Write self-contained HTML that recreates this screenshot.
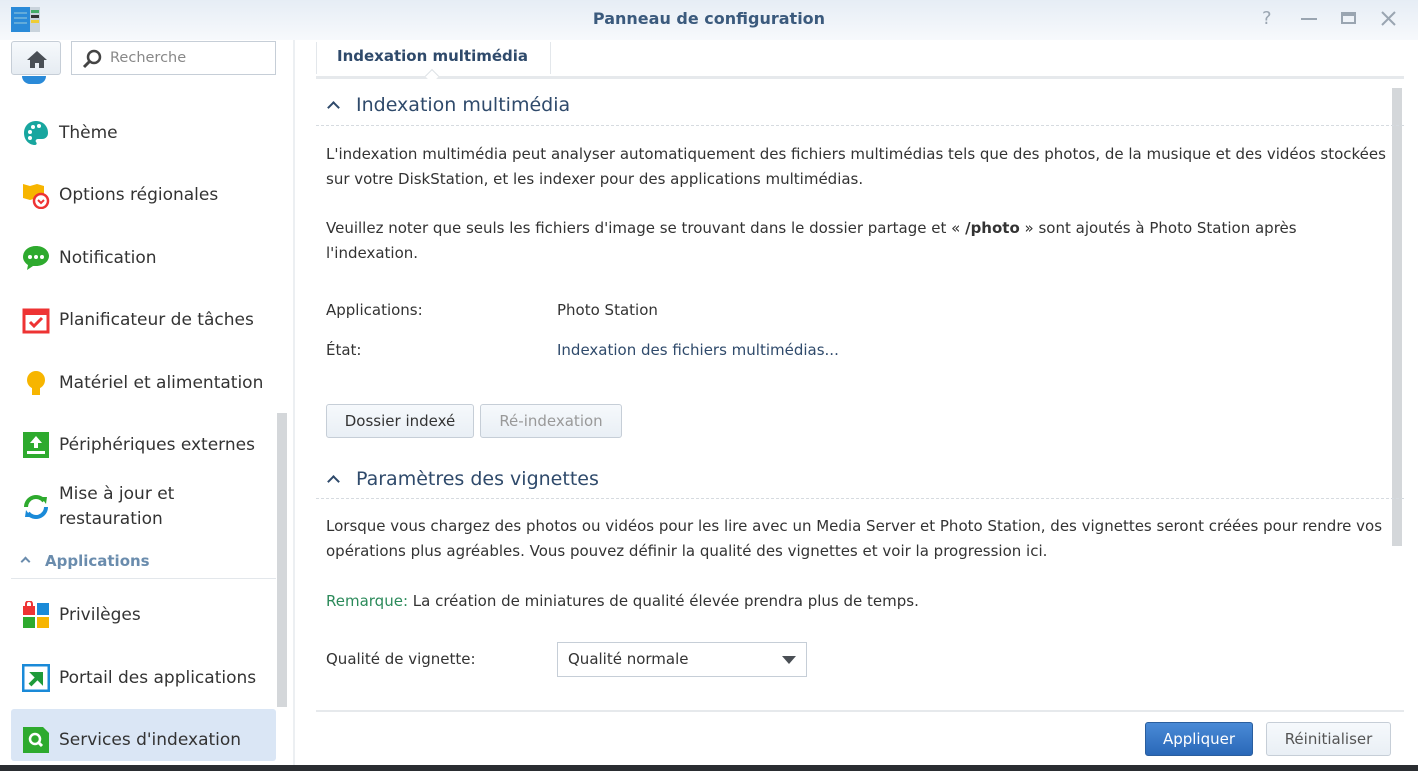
<!DOCTYPE html>
<html><head><meta charset="utf-8"><style>
*{margin:0;padding:0;box-sizing:border-box}
body{width:1418px;height:771px;overflow:hidden;background:#fff;font-family:"DejaVu Sans","Liberation Sans",sans-serif;color:#333;position:relative}
.abs{position:absolute}
.title{left:0;top:0;width:1418px;height:40px;background:linear-gradient(#e6edf5,#f7f9fc);}
.title .t{left:0;width:1418px;top:9px;text-align:center;font-size:16px;font-weight:bold;color:#3b5a7d}
.side{left:0;top:40px;width:295px;height:725px;border-right:2px solid #eceff2}
.it{position:absolute;left:22px;font-size:17px;color:#333;display:flex;align-items:center}
.it .ic{width:28px;height:28px;margin-right:9px;flex:none}
.p{font-size:15px;color:#333;position:absolute;left:326px;line-height:25px;white-space:nowrap}
.hd{position:absolute;left:356px;font-size:19px;color:#2f4a6b}
.hd:before{content:"";position:absolute;left:-27px;top:9px;width:7px;height:7px;border-left:2px solid #2f4a6b;border-top:2px solid #2f4a6b;transform:rotate(45deg)}
.dash{position:absolute;left:316px;width:1088px;border-top:1px dashed #d6dbe0}
.btn{position:absolute;height:34px;border:1px solid #c6ced7;border-radius:3px;background:linear-gradient(#f6f9fc,#e9eff5);font-size:15px;text-align:center;line-height:32px;color:#333}
</style></head><body>
<div class="abs title">
 <svg class="abs" style="left:11px;top:6px" width="30" height="27"><rect x="0" y="1" width="19" height="25" fill="#2a8ad8"/><rect x="19" y="1" width="10" height="25" fill="#c9d3dc"/><rect x="20" y="4" width="8" height="3" fill="#4a6"/><rect x="20" y="9" width="8" height="3" fill="#333"/><rect x="20" y="14" width="8" height="3" fill="#ec3"/><line x1="3" y1="7" x2="16" y2="7" stroke="#9cd" /><line x1="3" y1="12" x2="16" y2="12" stroke="#9cd"/><line x1="3" y1="17" x2="16" y2="17" stroke="#9cd"/></svg>
 <div class="abs t">Panneau de configuration</div>
 <div class="abs" style="left:1262px;top:8px;font-size:18px;color:#9aa5b1">?</div>
 <div class="abs" style="left:1301px;top:18px;width:16px;height:2px;background:#9aa5b1"></div>
 <div class="abs" style="left:1341px;top:12px;width:15px;height:12px;border:2px solid #9aa5b1;border-top-width:4px"></div>
 <svg class="abs" style="left:1381px;top:11px" width="15" height="15"><path d="M1 1L14 14M14 1L1 14" stroke="#9aa5b1" stroke-width="2"/></svg>
</div>
<div class="abs side">
 <div class="abs" style="left:11px;top:1px;width:50px;height:34px;border:1px solid #c6ced7;border-radius:3px;background:linear-gradient(#f6f9fc,#e6ecf2)"><svg style="margin:8px 0 0 14px" width="22" height="18"><path d="M11 1L1 10h3v8h5v-5h4v5h5v-8h3z" fill="#4a4f55"/></svg></div>
 <div class="abs" style="left:71px;top:1px;width:205px;height:34px;border:1px solid #c6ced7;background:#fff"><svg class="abs" style="left:10px;top:7px" width="20" height="20"><circle cx="12" cy="8" r="6" fill="none" stroke="#444" stroke-width="2.5"/><path d="M8 12L2 18" stroke="#444" stroke-width="3"/></svg><span class="abs" style="left:38px;top:8px;font-size:14.5px;color:#888">Recherche</span></div>
 <div class="abs" style="left:22px;top:36px;width:24px;height:8px;border-radius:0 0 12px 12px;background:#2a8ad8"></div>
</div>
<div class="it" style="top:119px"><svg class="ic" viewBox="0 0 28 28"><path d="M14 2C7 2 2 7 2 14s5 12 11 12c2 0 2-2 1-3s0-3 2-3h4c4 0 6-3 6-6C26 7 21 2 14 2z" fill="#18a69f"/><circle cx="8" cy="13" r="2" fill="#fff"/><circle cx="11" cy="8" r="2" fill="#fff"/><circle cx="17" cy="7" r="2" fill="#fff"/><circle cx="8" cy="19" r="2" fill="#fff"/></svg>Thème</div>
<div class="it" style="top:181px"><svg class="ic" viewBox="0 0 28 28"><path d="M1 3l7 2 7-2 7 2v14l-7-2-7 2-7-2z" fill="#f7b500"/><circle cx="19" cy="20" r="7" fill="#fff" stroke="#e33" stroke-width="2.5"/><path d="M16 19l3 3 3-3" stroke="#e33" stroke-width="2" fill="none"/></svg>Options régionales</div>
<div class="it" style="top:244px"><svg class="ic" viewBox="0 0 28 28"><path d="M14 2C6 2 1 7 1 13c0 3 2 6 5 8l-1 5 6-4c1 0 2 0 3 0 8 0 13-5 13-10S22 2 14 2z" fill="#2eaa2e"/><circle cx="8" cy="13" r="2" fill="#fff"/><circle cx="14" cy="13" r="2" fill="#fff"/><circle cx="20" cy="13" r="2" fill="#fff"/></svg>Notification</div>
<div class="it" style="top:306px"><svg class="ic" viewBox="0 0 28 28"><rect x="2" y="4" width="24" height="22" fill="#fff" stroke="#e33" stroke-width="3"/><rect x="2" y="4" width="24" height="5" fill="#e33"/><path d="M8 16l4 4 8-8" stroke="#e33" stroke-width="3" fill="none"/></svg>Planificateur de tâches</div>
<div class="it" style="top:369px"><svg class="ic" viewBox="0 0 28 28"><circle cx="14" cy="11" r="9" fill="#f7b500"/><rect x="10" y="19" width="8" height="7" fill="#f7b500"/></svg>Matériel et alimentation</div>
<div class="it" style="top:431px"><svg class="ic" viewBox="0 0 28 28"><rect x="1" y="1" width="26" height="26" fill="#2eaa2e"/><path d="M14 5l-6 7h4v5h4v-5h4z" fill="#fff"/><rect x="5" y="20" width="18" height="3" fill="#fff"/></svg>Périphériques externes</div>
<div class="it" style="top:482px;line-height:25px"><svg class="ic" viewBox="0 0 28 28"><path d="M4 14a10 10 0 0 1 18-6" stroke="#2eaa2e" stroke-width="4" fill="none"/><path d="M24 14a10 10 0 0 1-18 6" stroke="#1a8ad8" stroke-width="4" fill="none"/><path d="M19 4l6 0-1 7z" fill="#2eaa2e"/><path d="M9 24l-6 0 1-7z" fill="#1a8ad8"/></svg><span>Mise à jour et<br>restauration</span></div>
<div class="abs" style="left:22px;top:552px;font-size:15px;font-weight:bold;color:#6a8cad"><span style="display:inline-block;width:7px;height:7px;border-left:2px solid #6a8cad;border-top:2px solid #6a8cad;transform:rotate(45deg);margin:0 16px 1px 0"></span>Applications</div>
<div class="abs" style="left:11px;top:578px;width:265px;border-top:1px solid #e3e7eb"></div>
<div class="it" style="top:601px"><svg class="ic" viewBox="0 0 28 28"><rect x="1" y="5" width="12" height="9" fill="#e33"/><path d="M4 6V3a3 3 0 0 1 6 0v3" stroke="#e33" stroke-width="2" fill="none"/><rect x="15" y="2" width="12" height="12" fill="#1a8ad8"/><rect x="1" y="16" width="12" height="11" fill="#2eaa2e"/><rect x="15" y="16" width="12" height="11" fill="#f7b500"/></svg>Privilèges</div>
<div class="it" style="top:664px"><svg class="ic" viewBox="0 0 28 28"><rect x="1" y="1" width="26" height="26" fill="#fff" stroke="#1a8ad8" stroke-width="3"/><path d="M8 21l8-8m-4-3h7v7z" stroke="#1f9a3a" stroke-width="4" fill="#1f9a3a"/></svg>Portail des applications</div>
<div class="abs" style="left:11px;top:709px;width:265px;height:52px;background:#dae6f5;border-radius:3px"></div>
<div class="it" style="top:726px"><svg class="ic" viewBox="0 0 28 28"><path d="M1 1h20l6 6v20H1z" fill="#2eaa2e"/><circle cx="13" cy="13" r="5" fill="none" stroke="#fff" stroke-width="2.5"/><path d="M16 16l4 4" stroke="#fff" stroke-width="3"/></svg>Services d'indexation</div>
<div class="abs" style="left:277px;top:413px;width:10px;height:294px;background:#d4d7da"></div>
<div class="abs" style="left:0;top:765px;width:1418px;height:6px;background:#2a2d31"></div>

<div class="abs" style="left:316px;top:42px;width:1px;height:32px;background:#e3e7eb"></div>
<div class="abs" style="left:550px;top:42px;width:1px;height:32px;background:#e3e7eb"></div>
<div class="abs" style="left:337px;top:47px;font-size:15px;font-weight:bold;color:#2f4a6b">Indexation multimédia</div>
<div class="abs" style="left:316px;top:76px;width:1088px;height:3px;background:#e6e9ec"></div>
<div class="abs" style="left:427px;top:71px;width:10px;height:10px;background:#fff;border-left:1px solid #dde2e6;border-top:1px solid #dde2e6;transform:rotate(45deg)"></div>
<div class="abs" style="left:1392px;top:88px;width:10px;height:458px;background:#d4d7da"></div>

<div class="hd" style="top:94px">Indexation multimédia</div>
<div class="dash" style="top:125px"></div>
<div class="p" style="top:142px">L'indexation multimédia peut analyser automatiquement des fichiers multimédias tels que des photos, de la musique et des vidéos stockées<br>sur votre DiskStation, et les indexer pour des applications multimédias.</div>
<div class="p" style="top:216px">Veuillez noter que seuls les fichiers d'image se trouvant dans le dossier partage et « <b>/photo</b> » sont ajoutés à Photo Station après<br>l'indexation.</div>
<div class="p" style="top:298px">Applications:</div><div class="p" style="top:298px;left:557px">Photo Station</div>
<div class="p" style="top:338px">État:</div><div class="p" style="top:338px;left:557px;color:#2f4a6b">Indexation des fichiers multimédias...</div>
<div class="btn" style="left:326px;top:404px;width:148px">Dossier indexé</div>
<div class="btn" style="left:480px;top:404px;width:142px;color:#999">Ré-indexation</div>
<div class="hd" style="top:468px">Paramètres des vignettes</div>
<div class="dash" style="top:498px"></div>
<div class="p" style="top:514px">Lorsque vous chargez des photos ou vidéos pour les lire avec un Media Server et Photo Station, des vignettes seront créées pour rendre vos<br>opérations plus agréables. Vous pouvez définir la qualité des vignettes et voir la progression ici.</div>
<div class="p" style="top:589px"><span style="color:#2b8a5a">Remarque:</span> La création de miniatures de qualité élevée prendra plus de temps.</div>
<div class="p" style="top:647px">Qualité de vignette:</div>
<div class="abs" style="left:557px;top:642px;width:250px;height:35px;border:1px solid #c6ced7;background:#fff"><span class="abs" style="left:10px;top:7px;font-size:15px;color:#333">Qualité normale</span><svg class="abs" style="left:224px;top:13px" width="14" height="8"><path d="M0 0h14L7 8z" fill="#4a4f55"/></svg></div>
<div class="abs" style="left:316px;top:710px;width:1088px;height:2px;background:#e6e9ec"></div>
<div class="btn" style="left:1145px;top:722px;width:108px;background:linear-gradient(#4a8ad6,#2a68b8);border-color:#2a5e9e;color:#fff;font-size:15px">Appliquer</div>
<div class="btn" style="left:1266px;top:722px;width:125px;font-size:15px;color:#555">Réinitialiser</div>
</body></html>
